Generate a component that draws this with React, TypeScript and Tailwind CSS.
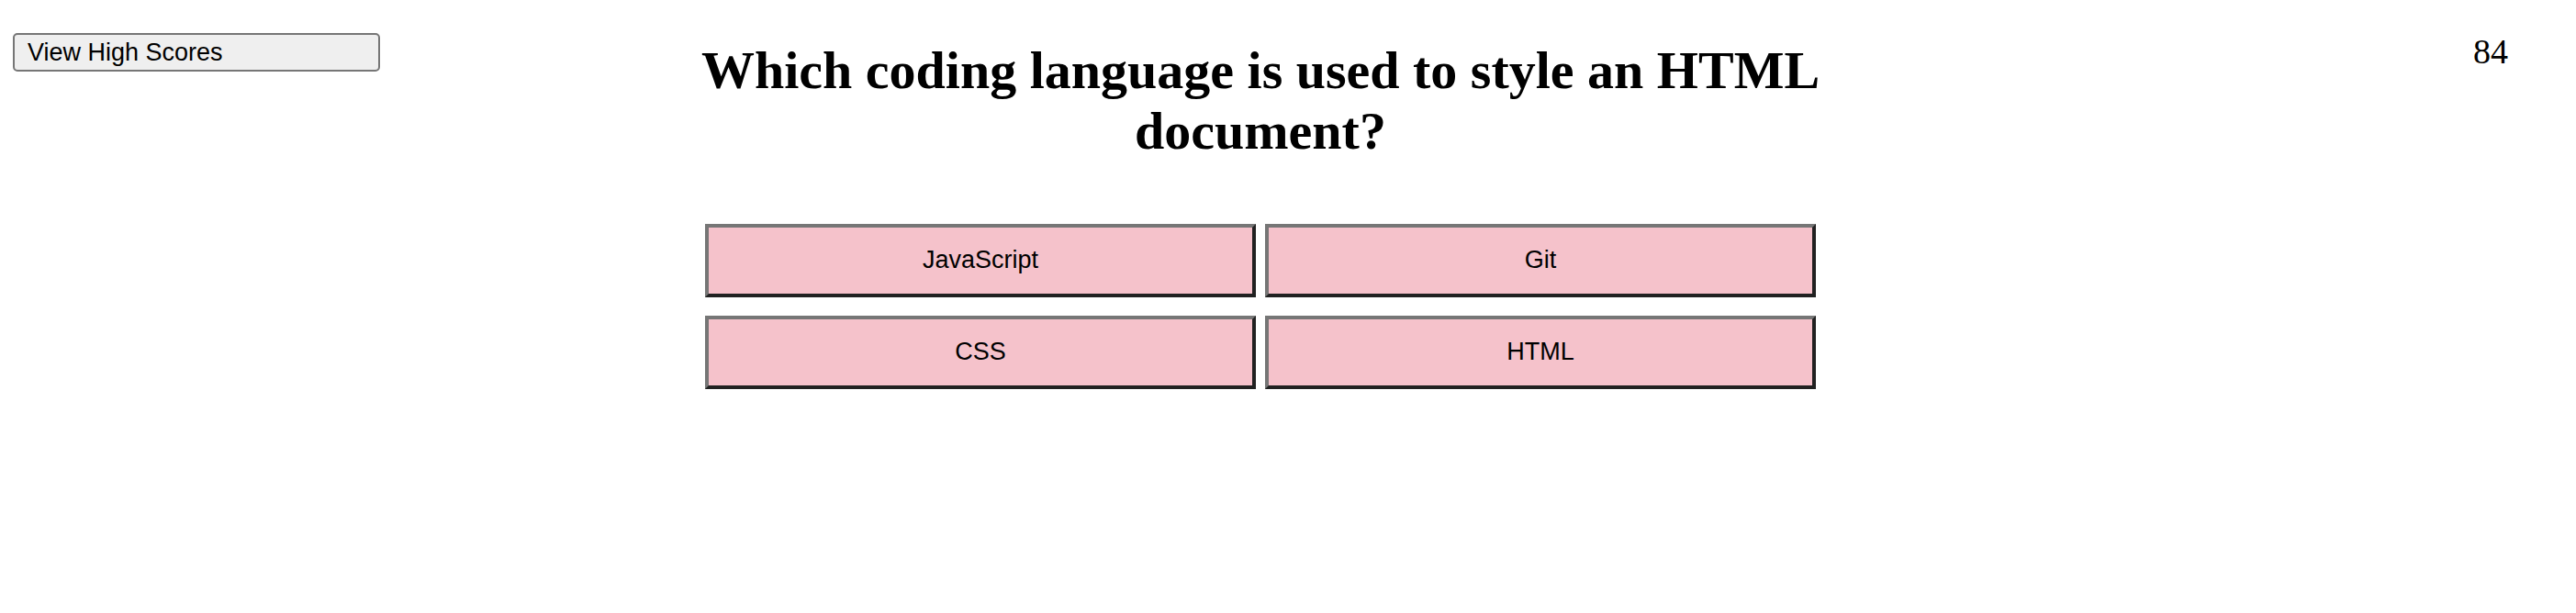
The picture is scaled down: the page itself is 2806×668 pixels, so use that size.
const answers = ["JavaScript", "Git", "CSS", "HTML"];

export default function App() {
  return (
    <div className="grid grid-cols-[200fr_177fr_605fr_177fr_200fr] items-start bg-white pt-9 pr-[74px] pl-[14px] text-black">
      <button className="rounded-[5px] border-2 border-[#767676] bg-[#efefef] px-[14px] text-left font-['Liberation_Sans',sans-serif] text-[27px] leading-[38px]">
        View High Scores
      </button>
      <main className="col-start-3 mt-2">
        <h1 className="-mx-2 text-center font-['Liberation_Serif',serif] text-[58px] leading-[66px] font-bold">
          Which coding language is used to style an HTML document?
        </h1>
        <div className="mt-[68px] grid grid-cols-2 gap-x-[10px] gap-y-5">
          {answers.map((answer) => (
            <button
              key={answer}
              className="h-20 border-4 border-t-[#767676] border-r-[#212121] border-b-[#212121] border-l-[#767676] bg-[#f5c2cb] pb-0.5 font-['Liberation_Sans',sans-serif] text-[27px]"
            >
              {answer}
            </button>
          ))}
        </div>
      </main>
      <p className="col-start-5 text-right font-['Liberation_Serif',serif] text-[38px] leading-[40px]">84</p>
    </div>
  );
}
